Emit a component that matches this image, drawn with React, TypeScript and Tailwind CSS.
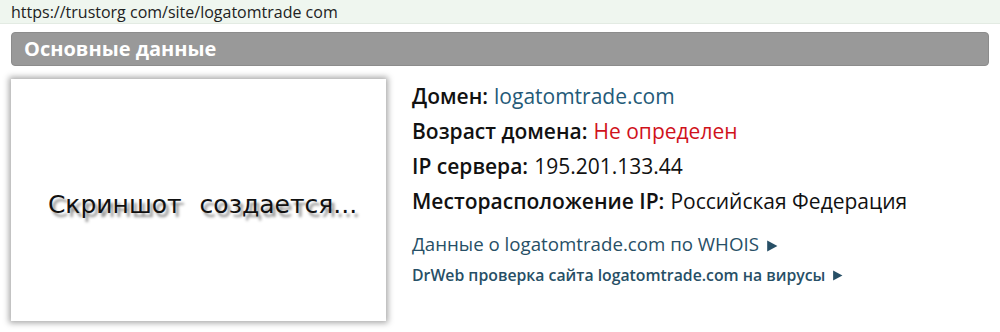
import React from 'react';

const INFO_ROWS = [
    { label: 'Домен:', value: 'logatomtrade.com', tone: 'link' },
    { label: 'Возраст домена:', value: 'Не определен', tone: 'red' },
    { label: 'IP сервера:', value: '195.201.133.44', tone: 'plain' },
    { label: 'Месторасположение IP:', value: 'Российская Федерация', tone: 'plain' },
];

function Arrow({ size }: { size: number }) {
    return (
        <svg width={size} height={size} viewBox="0 0 10 10" className="ml-[7px] shrink-0">
            <path d="M1 0.5 L9.5 5 L1 9.5 Z" fill="currentColor" />
        </svg>
    );
}

export default function App() {
    return (
        <div className="w-[1000px] h-[332px] bg-white overflow-hidden text-[#111]">
            <div className="h-[24px] bg-[#eff6ef] border-b border-[#e3ebe3] pl-[11px] flex items-center font-['Open_Sans',sans-serif] text-[16px] text-[#222] leading-none">
                https://trustorg com/site/logatomtrade com
            </div>

            <div className="px-[11px] pt-[8px]">
                <div className="h-[34px] bg-[#999999] rounded-[4px] border border-[#8c8c8c] pl-[12px] flex items-center font-['Open_Sans',sans-serif] text-[20px] font-bold text-white">
                    Основные данные
                </div>
            </div>

            <div className="flex pl-[11px] pt-[13px] gap-[26px]">
                <div className="w-[375px] h-[242px] bg-white shadow-[0_0_6px_2px_rgba(0,0,0,0.35)] flex items-center justify-center">
                    <span className="font-['DejaVu_Sans',sans-serif] text-[25px] text-[#111] [word-spacing:10px] [text-shadow:3px_4px_3px_rgba(0,0,0,0.45)] translate-y-[5px] translate-x-[4px]">
                        Скриншот создается...
                    </span>
                </div>

                <div className="flex flex-col font-['Open_Sans',sans-serif]">
                    {INFO_ROWS.map((row) => (
                        <div key={row.label} className="h-[35px] flex items-center text-[21px] leading-none">
                            <span className="font-semibold text-[#111]">{row.label}</span>
                            <span
                                className={`ml-[6px] ${row.tone === 'link' ? 'text-[#245a78]' : row.tone === 'red' ? 'text-[#d0121b]' : 'text-[#111]'}`}
                            >
                                {row.value}
                            </span>
                        </div>
                    ))}
                    <div className="h-[39px] flex items-end pb-[4px] text-[18.7px] text-[#274f66] leading-none">
                        <span>Данные о logatomtrade.com по WHOIS</span>
                        <span className="pb-[2px]"><Arrow size={12} /></span>
                    </div>
                    <div className="h-[35px] flex items-center text-[15.8px] font-semibold text-[#274f66] leading-none">
                        <span>DrWeb проверка сайта logatomtrade.com на вирусы</span>
                        <Arrow size={11} />
                    </div>
                </div>
            </div>
        </div>
    );
}
